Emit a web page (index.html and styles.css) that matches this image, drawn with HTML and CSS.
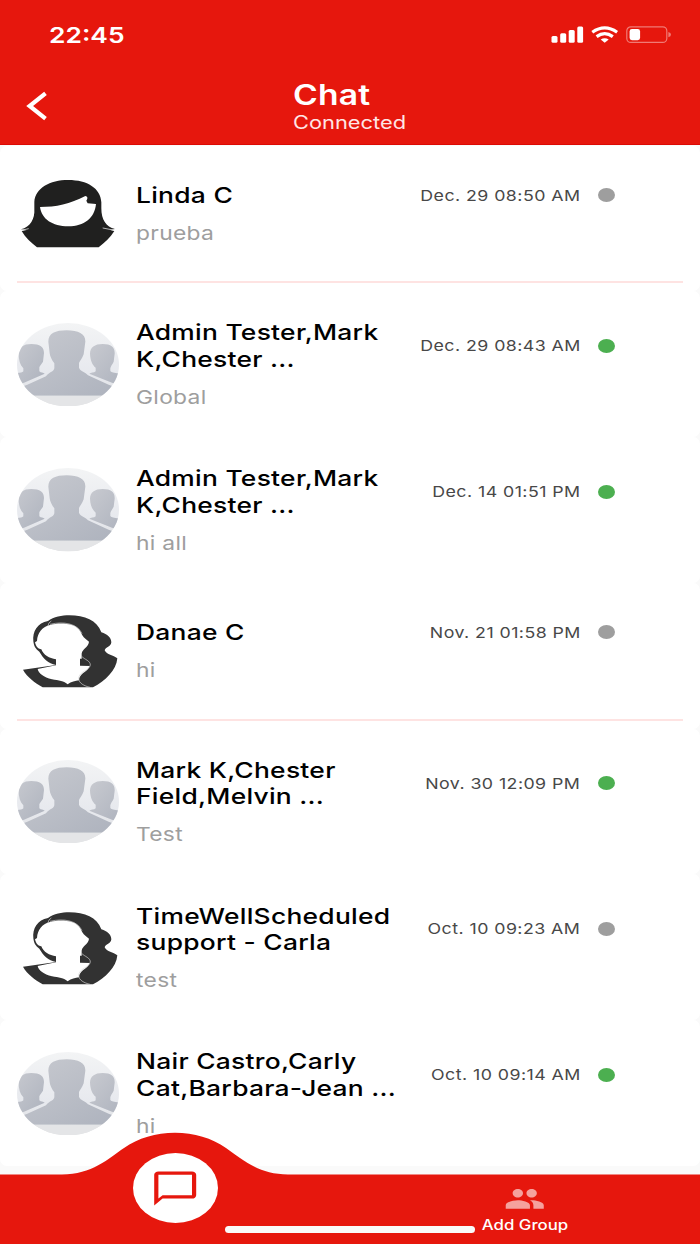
FILE: index.html
```html
<!DOCTYPE html>
<html lang="en">
<head>
<meta charset="utf-8">
<title>Chat</title>
<link rel="stylesheet" href="styles.css">
</head>
<body>
<svg class="defs" width="0" height="0" aria-hidden="true">
  <defs>
    <linearGradient id="back" x1="0" y1="0" x2="0" y2="1">
      <stop offset="0" stop-color="#f3f4f5"/><stop offset=".6" stop-color="#e7e9ee"/><stop offset="1" stop-color="#dedfe1"/>
    </linearGradient>
    <linearGradient id="person" x1="0" y1="0" x2="1" y2="1">
      <stop offset="0" stop-color="#c8cad0"/><stop offset="1" stop-color="#adb2bd"/>
    </linearGradient>
    <clipPath id="oval"><ellipse cx="168" cy="139" rx="153" ry="125"/></clipPath>
    <symbol id="group" viewBox="15 14 306 250" preserveAspectRatio="none">
      <g clip-path="url(#oval)">
        <rect x="15" y="14" width="306" height="250" fill="url(#back)"/>
        <path fill="url(#person)" d="M20 106C20 87 34 77 58 77C84 77 96 86 96 104L93 130C89 137 84 141 82 147V159C87 164 94 162 98 166L36 193L0 205V165C20 163 30 164 34 159V150C24 140 20 125 20 106Z"/>
        <path fill="url(#person)" d="M234 106C234 87 248 77 272 77C298 77 309 87 308 106L305 130C301 138 296 144 295 150V158C300 164 310 163 336 168V205L300 193L232 166C236 162 246 164 251 159V148C241 140 235 126 234 106Z"/>
        <path fill="url(#person)" d="M109 70C109 45 130 36 164 36C200 36 221 47 220 70L215 108C210 122 204 128 201 134V148C206 161 220 160 228 171L290 199L330 214V232H5V214L46 199L102 174C112 160 123 163 127 150V135C120 126 114 115 113 105Z"/>
        <path fill="#e4e5e7" d="M5 232H330V266H5Z"/>
      </g>
    </symbol>
    <symbol id="linda" viewBox="51 36 306 250" preserveAspectRatio="none">
      <path fill="#20201f" d="M63 208C91 200 105 177 103 146V126C106 84 149 60 205 60C262 60 302 85 304 127V145C304 179 318 201 345 207L331 210L343 213C331 233 313 248 296 262H111C94 248 76 233 65 213L80 210Z"/>
      <path fill="#fff" d="M120 141C168 141 210 132 256 108C262 109 265 114 259 122L263 130L288 132C284 174 252 199 205 199C157 199 125 177 120 141Z"/>
      <path fill="none" stroke="#fff" stroke-width="2" d="M64 211L86 206M344 211L308 204"/>
    </symbol>
    <symbol id="carla" viewBox="15 -2 306 250" preserveAspectRatio="none">
      <path fill="#323232" d="M64 95C61 65 76 40 108 34C125 22 150 17 172 17C218 17 255 32 268 68C286 73 298 85 298 98C297 111 280 113 278 122C284 136 304 136 316 146C313 182 280 214 243 233H92C68 219 45 202 33 180L132 166C108 160 95 148 82 126C70 117 66 110 64 95Z"/>
      <path fill="#fff" d="M75 94C76 70 92 50 114 46C135 40 160 40 180 46C200 52 206 66 211 77C216 86 224 90 231 96C230 112 210 118 209 132V147H204V168L233 169C226 188 202 190 201 212C190 214 178 216 167 224C157 214 140 213 120 209C95 202 80 192 77 178L132 167V149C112 146 94 136 88 119C77 118 72 110 69 98Z"/>
      <path fill="none" stroke="#d5d5d5" stroke-width="2" d="M108 49Q109 38 118 34M114 44C155 34 197 42 210 72M209 140C218 150 235 153 235 166C232 184 202 184 200 206C200 221 217 229 234 233"/>
    </symbol>
  </defs>
</svg>

<div class="screen">
  <header class="header">
    <div class="status">
      <span class="clock wide">22:45</span>
      <svg class="status-icons" viewBox="0 0 120 18">
        <g fill="#fff">
          <rect x=".5" y="10" width="6" height="6.7" rx="1.5"/>
          <rect x="9.2" y="7.2" width="6" height="9.5" rx="1.5"/>
          <rect x="17.7" y="4" width="6" height="12.7" rx="1.5"/>
          <rect x="26.3" y=".5" width="5.8" height="16.2" rx="1.5"/>
          <path d="M49.7 13.4Q53.7 11 57.7 13.4L53.7 16.8Z"/>
        </g>
        <g fill="none" stroke="#fff" stroke-width="3.2">
          <path d="M41.3 6.2Q53.7-2.4 66.1 6.2"/>
          <path d="M45.6 10.6Q53.7 4.7 61.8 10.6"/>
        </g>
        <rect x="75.8" y=".8" width="40" height="15.6" rx="4" fill="none" stroke="#f07b76" stroke-width="1.2"/>
        <rect x="78.6" y="3" width="10.5" height="11.2" rx="2.4" fill="#fff"/>
        <path d="M117.4 6Q120 6.5 120 8.6T117.4 11.2Z" fill="#f07b76"/>
      </svg>
    </div>
    <div class="titlebar">
      <svg class="back" viewBox="0 0 22 30"><path d="M19.5 2.3L3.6 15L19.5 27.7" fill="none" stroke="#fff" stroke-width="4.2"/></svg>
      <div class="titles">
        <h1 class="title wide">Chat</h1>
        <p class="subtitle wide">Connected</p>
      </div>
    </div>
  </header>

  <main class="list">
    <article class="row divided">
      <div class="body">
        <svg class="avatar"><use href="#linda"/></svg>
        <div class="info">
          <div class="top"><h2 class="name wide">Linda C</h2><time class="time wide">Dec. 29 08:50 AM</time><i class="dot"></i></div>
          <p class="last wide">prueba</p>
        </div>
      </div>
    </article>
    <article class="row">
      <div class="body">
        <svg class="avatar"><use href="#group"/></svg>
        <div class="info">
          <div class="top"><h2 class="name wide">Admin Tester,Mark<br>K,Chester ...</h2><time class="time wide">Dec. 29 08:43 AM</time><i class="dot online"></i></div>
          <p class="last wide">Global</p>
        </div>
      </div>
    </article>
    <article class="row">
      <div class="body">
        <svg class="avatar"><use href="#group"/></svg>
        <div class="info">
          <div class="top"><h2 class="name wide">Admin Tester,Mark<br>K,Chester ...</h2><time class="time wide">Dec. 14 01:51 PM</time><i class="dot online"></i></div>
          <p class="last wide">hi all</p>
        </div>
      </div>
    </article>
    <article class="row divided">
      <div class="body">
        <svg class="avatar"><use href="#carla"/></svg>
        <div class="info">
          <div class="top"><h2 class="name wide">Danae C</h2><time class="time wide">Nov. 21 01:58 PM</time><i class="dot"></i></div>
          <p class="last wide">hi</p>
        </div>
      </div>
    </article>
    <article class="row">
      <div class="body">
        <svg class="avatar"><use href="#group"/></svg>
        <div class="info">
          <div class="top"><h2 class="name wide">Mark K,Chester<br>Field,Melvin ...</h2><time class="time wide">Nov. 30 12:09 PM</time><i class="dot online"></i></div>
          <p class="last wide">Test</p>
        </div>
      </div>
    </article>
    <article class="row">
      <div class="body">
        <svg class="avatar"><use href="#carla"/></svg>
        <div class="info">
          <div class="top"><h2 class="name wide">TimeWellScheduled<br>support - Carla</h2><time class="time wide">Oct. 10 09:23 AM</time><i class="dot"></i></div>
          <p class="last wide">test</p>
        </div>
      </div>
    </article>
    <article class="row">
      <div class="body">
        <svg class="avatar"><use href="#group"/></svg>
        <div class="info">
          <div class="top"><h2 class="name wide">Nair Castro,Carly<br>Cat,Barbara-Jean ...</h2><time class="time wide">Oct. 10 09:14 AM</time><i class="dot online"></i></div>
          <p class="last wide">hi</p>
        </div>
      </div>
    </article>
  </main>

  <nav class="nav">
    <svg class="nav-shape" viewBox="0 0 700 112"><path fill="#e6170d" d="M0 42.4H62C92 42.4 108 27 124 16C138 6 156 .7 175 .7C194 .7 212 6 226 16C242 27 258 42.4 288 42.4H700V112H0Z"/></svg>
    <div class="nav-items">
      <a class="nav-item">
        <span class="bubble">
          <svg class="chat-icon" viewBox="0 0 24 24" preserveAspectRatio="none"><path fill="#e6170d" d="M20 2H4c-1.1 0-2 .9-2 2v18l4-4h14c1.1 0 2-.9 2-2V4c0-1.1-.9-2-2-2zm0 14H6l-2 2V4h16v12z"/></svg>
        </span>
      </a>
      <a class="nav-item">
        <svg class="people-icon" viewBox="0 0 24 24" preserveAspectRatio="none"><path fill="#f5a19d" d="M16 11c1.66 0 2.99-1.34 2.99-3S17.66 5 16 5c-1.66 0-3 1.34-3 3s1.34 3 3 3zm-8 0c1.66 0 2.99-1.34 2.99-3S9.66 5 8 5C6.34 5 5 6.34 5 8s1.34 3 3 3zm0 2c-2.33 0-7 1.17-7 3.5V19h14v-2.5c0-2.33-4.67-3.5-7-3.5zm8 0c-.29 0-.62.02-.97.05 1.16.84 1.97 1.97 1.97 3.45V19h6v-2.5c0-2.33-4.67-3.5-7-3.5z"/></svg>
        <span class="nav-label wide">Add Group</span>
      </a>
    </div>
    <div class="home-bar"></div>
  </nav>
</div>
</body>
</html>
```
FILE: styles.css
```css
* { box-sizing: border-box; margin: 0; padding: 0; }

body { font-family: Inter, "Liberation Sans", sans-serif; background: #fafafa; color: #000; }

.defs { position: absolute; }

.screen { position: relative; width: 700px; height: 1244px; overflow: hidden; background: #fafafa; }

/* Horizontally extended lettering */
.wide { transform: scaleX(1.2); transform-origin: left center; white-space: nowrap; }

.header { height: 144.5px; background: #e6170d; color: #fff; border-bottom: 1px solid #dc0a04; }
.status { display: flex; justify-content: space-between; padding: 26px 29px 0 49px; height: 76px; }
.clock { font-size: 22px; line-height: 18px; font-weight: 600; }
.status-icons { width: 120px; height: 18px; }
.titlebar { display: flex; }
.back { width: 22px; height: 30px; margin: 15px 0 0 26px; }
.titles { margin-left: 245px; padding-top: 1px; }
.title { font-size: 28px; line-height: 36px; font-weight: 600; letter-spacing: .2px; }
.subtitle { font-size: 18.2px; line-height: 18px; font-weight: 400; color: #ffe6e5; }

.list { display: flex; flex-direction: column; padding-top: 1px; }
.row { display: flex; flex-direction: column; height: 145.8px; padding: 0 17px; background: #fff; border-radius: 7px; }
.row.divided::after { content: ""; height: 2px; margin-bottom: 8px; background: #fee3e2; }
.body { flex: 1; display: flex; align-items: center; }
.avatar { width: 102px; height: 83.3px; flex: none; margin-right: 16.5px; }
.info { flex: 1; padding-top: 1px; }
.top { display: flex; align-items: center; padding-right: 68px; }
.name { font-size: 22px; line-height: 26.4px; font-weight: 500; letter-spacing: .22px; }
.time { margin-left: auto; margin-right: 17.5px; padding-top: 1px; font-size: 14.8px; line-height: 20px; letter-spacing: .38px; color: #484848; transform-origin: right center; }
.dot { width: 17px; height: 14px; border-radius: 50%; background: #9e9e9e; }
.dot.online { background: #4caf50; }
.last { margin-top: 12.6px; font-size: 19px; line-height: 25.2px; letter-spacing: .25px; color: #9e9e9e; }

/* Navigation floats over the end of the list */
.nav { position: absolute; left: 0; right: 0; bottom: 0; height: 112px; color: #fff; }
.nav-shape { position: absolute; inset: 0; width: 700px; height: 112px; }
.nav-items { position: relative; display: grid; grid-template-columns: 1fr 1fr; height: 112px; }
.nav-item { display: flex; flex-direction: column; align-items: center; }
.bubble { display: flex; align-items: center; justify-content: center; width: 85px; height: 70px; margin-top: 21px; border-radius: 50%; background: #fff; }
.chat-icon { width: 50.4px; height: 40.8px; }
.people-icon { width: 41.5px; height: 33.7px; margin-top: 50.3px; }
.nav-label { font-size: 14px; line-height: 18px; margin-top: .5px; font-weight: 500; transform-origin: center; }
.home-bar { position: absolute; left: 225px; bottom: 11px; width: 250px; height: 7.5px; border-radius: 4px; background: #fafafa; }
```
